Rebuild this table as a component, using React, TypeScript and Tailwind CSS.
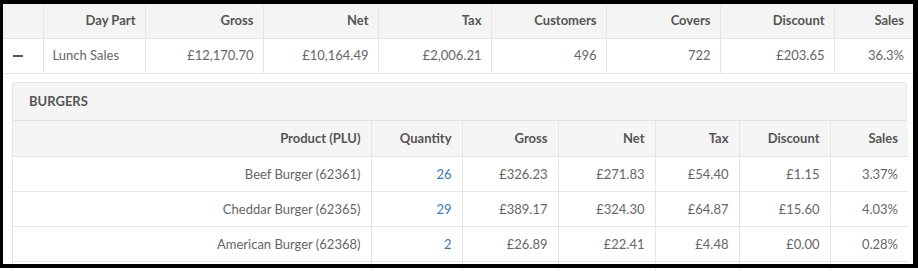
import React from 'react';

const topCols = [40, 102, 118, 115, 113, 115, 114, 114, 79];
const topHeads = ['', 'Day Part', 'Gross', 'Net', 'Tax', 'Customers', 'Covers', 'Discount', 'Sales'];
const topRow = ['Lunch Sales', '£12,170.70', '£10,164.49', '£2,006.21', '496', '722', '£203.65', '36.3%'];

const subCols = [358, 91, 96, 97, 84, 91, 78];
const subHeads = ['Product (PLU)', 'Quantity', 'Gross', 'Net', 'Tax', 'Discount', 'Sales'];
const products = [
  ['Beef Burger (62361)', '26', '£326.23', '£271.83', '£54.40', '£1.15', '3.37%'],
  ['Cheddar Burger (62365)', '29', '£389.17', '£324.30', '£64.87', '£15.60', '4.03%'],
  ['American Burger (62368)', '2', '£26.89', '£22.41', '£4.48', '£0.00', '0.28%'],
];

const App: React.FC = () => {
  return (
    <div className="relative w-[918px] h-[271px] overflow-hidden bg-white font-['Lato',sans-serif] text-[13px] text-[#666]">
      <div className="pl-[3px] pt-[3px] pr-[5px]">
        <table className="w-[910px] table-fixed border-collapse">
          <colgroup>
            {topCols.map((w, i) => (
              <col key={i} style={{ width: w }} />
            ))}
          </colgroup>
          <thead>
            <tr className="h-[35px] bg-[#f4f4f4] border-b border-[#e1e5e9]">
              {topHeads.map((h, i) => (
                <th
                  key={i}
                  className={`px-[9px] text-right font-bold text-[#555] ${i < topHeads.length - 1 ? 'border-r border-[#e6e6e6]' : ''}`}
                >
                  {h}
                </th>
              ))}
            </tr>
          </thead>
          <tbody>
            <tr className="h-[35px] border-b border-[#e6e6e6]">
              <td className="border-r border-[#e6e6e6] pl-[10px] pt-[1px]">
                <div className="w-[10px] h-[2px] bg-[#555]" />
              </td>
              {topRow.map((v, i) => (
                <td
                  key={i}
                  className={`px-[9px] pt-[1px] ${i === 0 ? 'text-left' : 'text-right'} ${i < topRow.length - 1 ? 'border-r border-[#e6e6e6]' : ''}`}
                >
                  {v}
                </td>
              ))}
            </tr>
            <tr>
              <td colSpan={9} className="pl-[9px] pr-[6px] pt-[8px]">
                <div className="rounded-t-[3px] border border-[#e6e6e6] bg-[#f5f5f5]">
                  <div className="h-[38px] flex items-center pl-[16px] pt-[1px] font-bold text-[#555] border-b border-[#e1e1e1]">
                    BURGERS
                  </div>
                  <table className="w-full table-fixed border-collapse bg-white">
                    <colgroup>
                      {subCols.map((w, i) => (
                        <col key={i} style={{ width: w }} />
                      ))}
                    </colgroup>
                    <thead>
                      <tr className="h-[36px] bg-[#f5f5f5] border-b border-[#e1e1e1]">
                        {subHeads.map((h, i) => (
                          <th
                            key={i}
                            className={`px-[10px] text-right font-bold text-[#555] ${i < subHeads.length - 1 ? 'border-r border-[#e6e6e6]' : ''}`}
                          >
                            {h}
                          </th>
                        ))}
                      </tr>
                    </thead>
                    <tbody>
                      {products.map((row, r) => (
                        <tr key={r} className="h-[35px] border-b border-[#e6e6e6]">
                          {row.map((v, i) => (
                            <td
                              key={i}
                              className={`px-[10px] pt-[2px] text-right ${i === 1 ? 'text-[#3a77b5]' : ''} ${i < row.length - 1 ? 'border-r border-[#e6e6e6]' : ''}`}
                            >
                              {v}
                            </td>
                          ))}
                        </tr>
                      ))}
                      <tr className="h-[20px]">
                        {subCols.map((_, i) => (
                          <td key={i} className={i < subCols.length - 1 ? 'border-r border-[#e6e6e6]' : ''} />
                        ))}
                      </tr>
                    </tbody>
                  </table>
                </div>
              </td>
            </tr>
          </tbody>
        </table>
      </div>
      <div className="pointer-events-none absolute left-0 top-0 w-[918px] h-[268px] border-l-[3px] border-t-[4px] border-r-[5px] border-b-[4px] border-black" />
    </div>
  );
};

export default App;
